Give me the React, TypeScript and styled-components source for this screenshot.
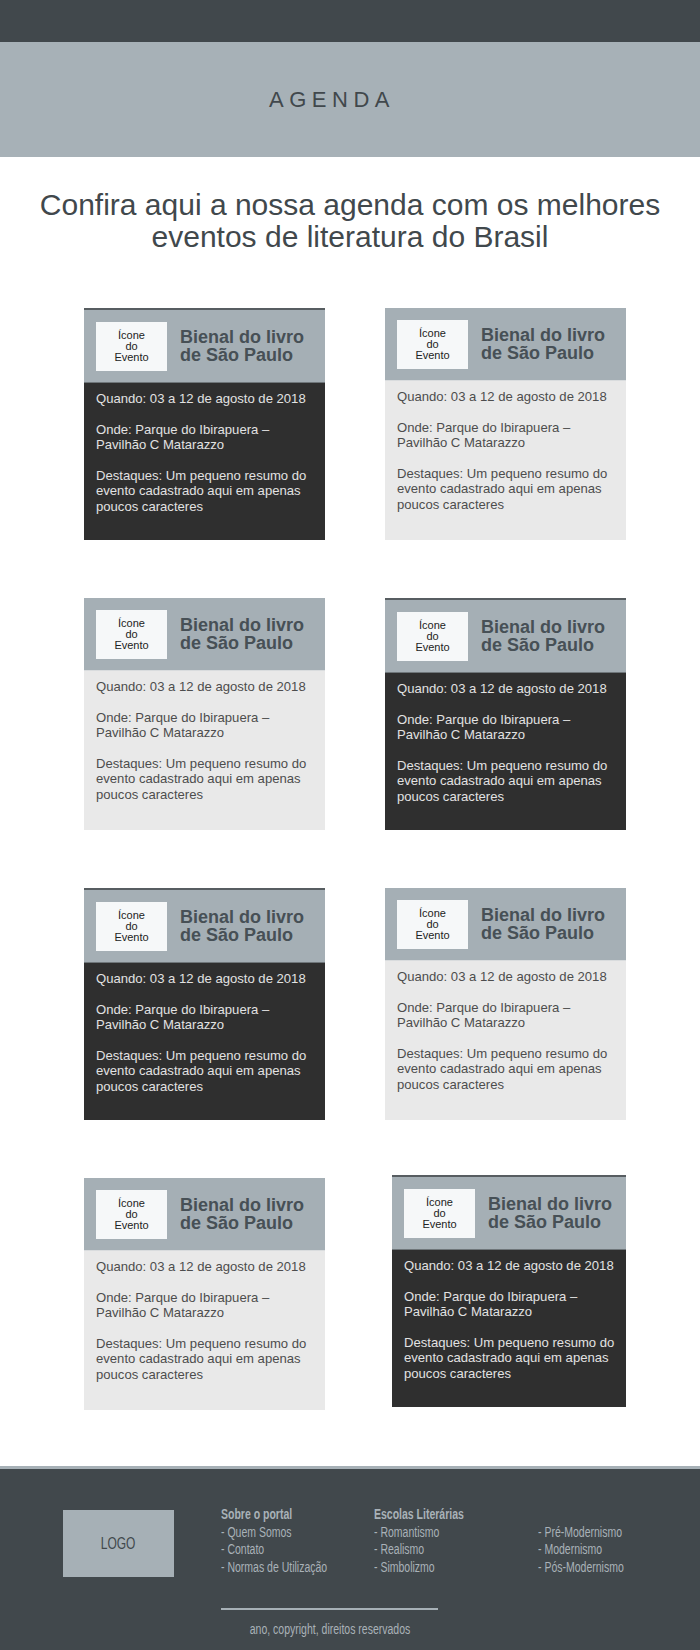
import React from "react";
import styled, { createGlobalStyle, css } from "styled-components";

const GlobalStyle = createGlobalStyle`
  html, body {
    margin: 0;
    padding: 0;
    background: #fff;
  }
  body {
    font-family: "Liberation Sans", Arial, sans-serif;
  }
`;

const Page = styled.div`
  width: 700px;
  display: flex;
  flex-direction: column;
`;

const TopBar = styled.div`
  height: 42px;
  background: #41484c;
`;

const Banner = styled.div`
  height: 115px;
  background: #a7b1b7;
  display: flex;
  align-items: center;
  justify-content: center;
`;

const BannerTitle = styled.h1`
  margin: 0 36px 0 0;
  font-family: "Liberation Sans", Arial, sans-serif;
  font-weight: 400;
  font-size: 22px;
  letter-spacing: 5.5px;
  color: #41484c;
`;

const Heading = styled.h2`
  margin: 32px 0 0;
  text-align: center;
  font-family: "Liberation Sans", Arial, sans-serif;
  font-weight: 400;
  font-size: 30px;
  line-height: 32px;
  color: #41484c;
`;

const CardGrid = styled.div`
  margin-top: 55px;
  padding-left: 84px;
  display: grid;
  grid-template-columns: 241px 241px;
  column-gap: 60px;
  row-gap: 58px;
  align-items: start;
`;

const Card = styled.div<{ $dark?: boolean; $nudge?: boolean }>`
  height: 232px;
  display: flex;
  flex-direction: column;
  background: ${(p) => (p.$dark ? "#2f2f2f" : "#e9e9e9")};
  ${(p) =>
    p.$nudge &&
    css`
      margin: -3px 0 0 7px;
    `}
`;

const CardHeader = styled.div<{ $dark?: boolean }>`
  height: 72px;
  flex-shrink: 0;
  display: flex;
  align-items: center;
  gap: 13px;
  padding: 0 12px;
  background: #a5afb5;
  border-top: ${(p) => (p.$dark ? "2px solid #575d61" : "none")};
  border-bottom: 1px solid ${(p) => (p.$dark ? "#6f767a" : "#d9dcde")};
`;

const IconBox = styled.div`
  width: 71px;
  height: 49px;
  flex-shrink: 0;
  background: #f6f8f9;
  display: flex;
  align-items: center;
  justify-content: center;
  text-align: center;
  font-size: 11px;
  line-height: 11px;
  color: #222;
`;

const CardTitle = styled.div`
  font-weight: 700;
  font-size: 18px;
  line-height: 18px;
  color: #475056;
`;

const CardBody = styled.div<{ $dark?: boolean }>`
  flex: 1;
  padding: 8px 12px 0;
  font-size: 13.1px;
  line-height: 15.5px;
  color: ${(p) => (p.$dark ? "#e2e2e2" : "#4d4d4d")};

  p {
    margin: 0 0 15px;
    white-space: nowrap;
  }
`;

const Footer = styled.footer`
  margin-top: 56px;
  border-top: 3px solid #a6b0b6;
  background: #41484c;
  padding-top: 37px;
  box-sizing: border-box;
  height: 186px;
  font-family: "Liberation Sans Narrow", "Arial Narrow", "Liberation Sans", sans-serif;
  color: #a9b2b8;
`;

const FooterRow = styled.div`
  display: flex;
  align-items: flex-start;
`;

/* the footer uses a narrow face; no narrow font is installed, so squeeze it */
const Narrow = styled.span<{ $center?: boolean }>`
  display: inline-block;
  white-space: nowrap;
  transform: scaleX(0.75);
  transform-origin: ${(p) => (p.$center ? "center" : "left")} center;
`;

const Logo = styled.div`
  margin: 4px 47px 0 63px;
  width: 111px;
  height: 67px;
  background: #a6b0b6;
  display: flex;
  align-items: center;
  justify-content: center;
  font-size: 16px;
  color: #41484c;
`;

const FooterCol = styled.div<{ $width?: number }>`
  width: ${(p) => (p.$width ? `${p.$width}px` : "auto")};
  display: flex;
  flex-direction: column;
  font-size: 14px;
  line-height: 17.5px;
`;

const ColTitle = styled.div`
  font-weight: 700;
  height: 17.5px;
`;

const Copyright = styled.div`
  margin: 31px 0 0 221px;
  width: 217px;
  border-top: 2px solid #a6b0b6;
  padding-top: 11px;
  text-align: center;
  font-size: 14px;
  line-height: 17.5px;
`;

const darkPattern = [true, false, false, true, true, false, false, true];

const footerCols = [
  { title: "Sobre o portal", width: 153, items: ["- Quem Somos", "- Contato", "- Normas de Utilização"] },
  { title: "Escolas Literárias", width: 164, items: ["- Romantismo", "- Realismo", "- Simbolizmo"] },
  { title: "", width: 0, items: ["- Pré-Modernismo", "- Modernismo", "- Pós-Modernismo"] },
];

const App: React.FC = () => {
  return (
    <>
      <GlobalStyle />
      <Page>
        <TopBar />
        <Banner>
          <BannerTitle>AGENDA</BannerTitle>
        </Banner>

        <Heading>
          Confira aqui a nossa agenda com os melhores
          <br />
          eventos de literatura do Brasil
        </Heading>

        <CardGrid>
          {darkPattern.map((dark, i) => (
            <Card key={i} $dark={dark} $nudge={i === 7}>
              <CardHeader $dark={dark}>
                <IconBox>
                  Ícone
                  <br />
                  do
                  <br />
                  Evento
                </IconBox>
                <CardTitle>
                  Bienal do livro
                  <br />
                  de São Paulo
                </CardTitle>
              </CardHeader>
              <CardBody $dark={dark}>
                <p>Quando: 03 a 12 de agosto de 2018</p>
                <p>
                  Onde: Parque do Ibirapuera –
                  <br />
                  Pavilhão C Matarazzo
                </p>
                <p>
                  Destaques: Um pequeno resumo do
                  <br />
                  evento cadastrado aqui em apenas
                  <br />
                  poucos caracteres
                </p>
              </CardBody>
            </Card>
          ))}
        </CardGrid>

        <Footer>
          <FooterRow>
            <Logo>
              <Narrow $center>LOGO</Narrow>
            </Logo>
            {footerCols.map((col, i) => (
              <FooterCol key={i} $width={col.width || undefined}>
                <ColTitle>{col.title && <Narrow>{col.title}</Narrow>}</ColTitle>
                {col.items.map((item) => (
                  <Narrow key={item}>{item}</Narrow>
                ))}
              </FooterCol>
            ))}
          </FooterRow>
          <Copyright>
            <Narrow $center>ano, copyright, direitos reservados</Narrow>
          </Copyright>
        </Footer>
      </Page>
    </>
  );
};

export default App;
